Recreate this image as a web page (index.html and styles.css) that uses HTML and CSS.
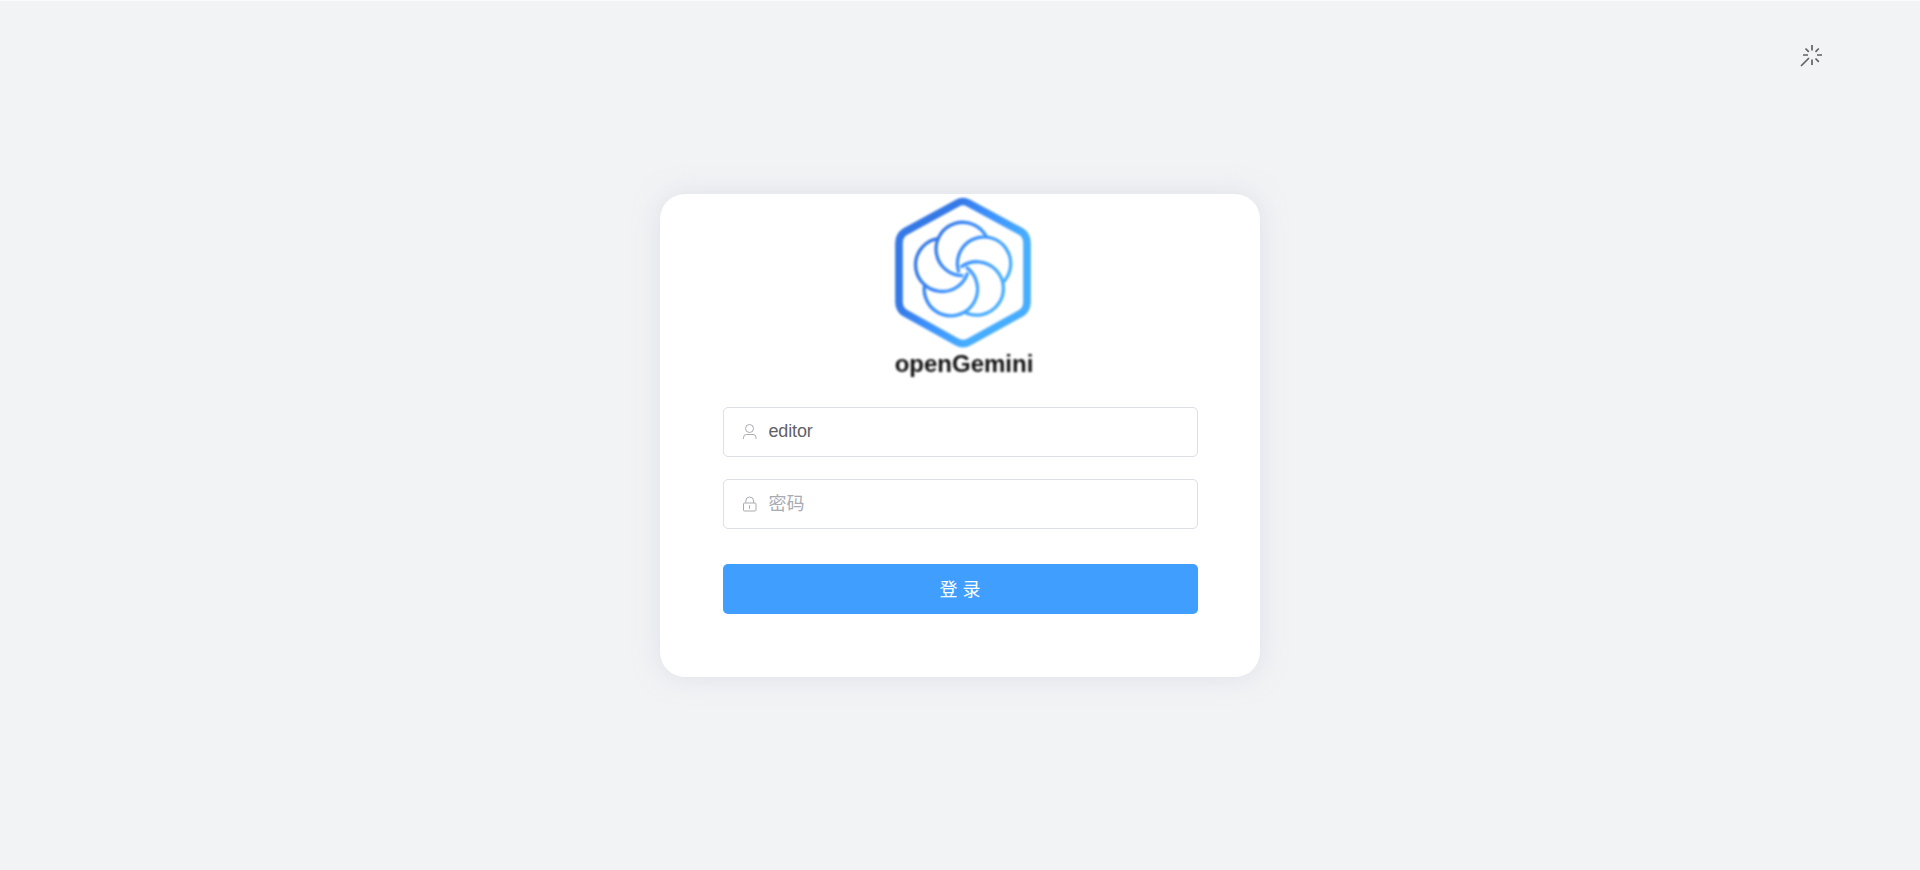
FILE: index.html
```html
<!DOCTYPE html>
<html lang="zh-CN">
<head>
<meta charset="utf-8">
<title>openGemini</title>
<link rel="stylesheet" href="styles.css">
</head>
<body>
<div class="page">
  <header class="toolbar">
    <svg class="theme-icon" viewBox="0 0 24 24">
      <path d="M12 2v5.500M12 16.500v5.500M3 12h5M17 12h5M5.500 5.500l3.300 3.300M18.800 5.500l-3.300 3.300M15.500 15.500l3.300 3.300M9 15l-8 8"/>
    </svg>
  </header>
  <main class="card">
    <svg class="logo" viewBox="0 27 510 573">
      <defs>
        <linearGradient id="brand" gradientUnits="userSpaceOnUse" x1="150" y1="200" x2="350" y2="310">
          <stop offset="0" stop-color="#3579e6"/>
          <stop offset=".45" stop-color="#3d92ff"/>
          <stop offset="1" stop-color="#47adff"/>
        </linearGradient>
        <path id="petal" d="M321 159A80 80 0 1 0 250 272"/>
        <mask id="flower" maskUnits="userSpaceOnUse" x="0" y="0" width="510" height="600">
          <g fill="none" stroke="#fff" stroke-width="10">
            <use href="#petal"/>
            <use href="#petal" transform="rotate(72 250 258)"/>
            <use href="#petal" transform="rotate(144 250 258)"/>
            <use href="#petal" transform="rotate(216 250 258)"/>
            <use href="#petal" transform="rotate(288 250 258)"/>
          </g>
        </mask>
      </defs>
      <path class="logo-frame" stroke="url(#brand)" d="M233 54Q249 45 265 54L422 139Q441 151 441 174V351Q441 373 424 384L267 471Q249 481 231 471L75 384Q57 373 57 351V174Q57 151 77 139Z"/>
      <rect width="510" height="600" fill="url(#brand)" mask="url(#flower)"/>
      <text class="logo-name" x="44" y="560">openGemini</text>
    </svg>
    <form class="form">
      <div class="field">
        <svg class="field-icon" viewBox="0 0 16 16"><circle cx="7.500" cy="4.500" r="4"/><path d="M1.500 15v-1.500a3 3 0 0 1 3-3h6.500a3 3 0 0 1 3 3v1.500"/></svg>
        <span class="value">editor</span>
      </div>
      <div class="field">
        <svg class="field-icon" viewBox="0 0 16 16"><rect x="1.500" y="7" width="12.500" height="8" rx="1"/><path d="M3.800 7V5a3.900 4 0 0 1 7.800 0v2M7.500 9.300v3.500"/></svg>
        <span class="placeholder">密码</span>
      </div>
      <button class="submit" type="button">登 录</button>
    </form>
  </main>
</div>
</body>
</html>
```
FILE: styles.css
```css
* { box-sizing: border-box; }
body {
  margin: 0;
  font-family: "Liberation Sans", "Noto Sans CJK SC", sans-serif;
}
.page {
  height: 870px;
  overflow: hidden;
  border-top: 1px solid #fafbfc;
  background: #f1f3f5;
}
.toolbar {
  display: flex;
  justify-content: flex-end;
  height: 193px;
  padding: 42px 96px 0 0;
}
.theme-icon {
  width: 24px;
  height: 24px;
  fill: none;
  stroke: #606266;
  stroke-width: 1.700;
}
.card {
  display: flex;
  flex-direction: column;
  align-items: center;
  width: 600px;
  height: 483px;
  margin: 0 auto;
  border-radius: 25px;
  background: #fff;
  box-shadow: 0 0 25px rgba(205, 207, 220, .5);
}
.logo {
  width: 170px;
  height: 191px;
  margin-left: 10px;
  filter: blur(.8px);
}
.logo-frame {
  fill: none;
  stroke-width: 23;
}
.logo-name {
  font: bold 72px "Liberation Sans", sans-serif;
  fill: #111;
}
.form {
  display: flex;
  flex-direction: column;
  gap: 22px;
  width: 475px;
  margin-top: 22px;
}
.field {
  display: flex;
  align-items: center;
  gap: 11px;
  height: 50px;
  padding: 0 18px;
  border: 1px solid #dcdfe6;
  border-radius: 5px;
  font-size: 18px;
}
.field-icon {
  width: 16px;
  height: 16px;
  fill: none;
  stroke: #a8abb2;
}
.value {
  color: #606266;
  line-height: 20px;
  margin-top: -3px;
  letter-spacing: -.15px;
}
.placeholder {
  color: #a8abb2;
  line-height: 20px;
  margin-top: -1px;
}
.submit {
  height: 50px;
  margin-top: 13px;
  padding: 0 0 2px;
  border: 0;
  border-radius: 5px;
  background: #409eff;
  color: #fff;
  font: 18px "Liberation Sans", "Noto Sans CJK SC", sans-serif;
}
```
